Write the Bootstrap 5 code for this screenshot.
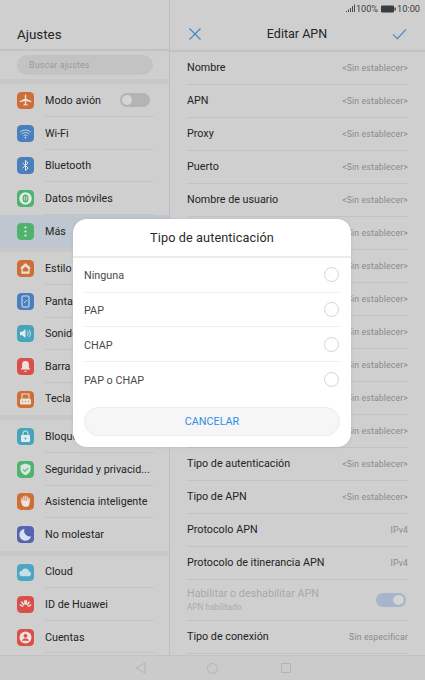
<!DOCTYPE html>
<html lang="es">
<head>
<meta charset="utf-8">
<title>Editar APN</title>
<link href="https://cdn.jsdelivr.net/npm/bootstrap@5.3.0/dist/css/bootstrap.min.css" rel="stylesheet">
<style>
html,body{height:680px;overflow:hidden}
body{background:#cfcfcf;font-family:Roboto,"Liberation Sans",sans-serif;color:#242424;position:relative;width:425px}
.screen{height:655px}
.leftpane{width:170px;border-right:1px solid #bfbfbf;flex:none}
.rightpane{flex:1;min-width:0}
.headbar{height:51px;border-bottom:2px solid #c2c2c2}
.lefthead{padding:28px 0 0 17px;font-size:13.4px;line-height:14px}
.searchwrap{height:28.4px;padding:4px 16px 0 17px}
.searchpill{height:20px;background:#c3c3c3;border-radius:10px;font-size:8.8px;line-height:21px;padding-left:12px;color:#9a9a9a;letter-spacing:.2px}
.band{height:5px;background:#c8c8c8}
.srow{height:32.6px;padding-left:17px;font-size:10.75px}
.srow .stext{flex:1;height:100%;margin-left:11px;margin-right:15px;border-bottom:1px solid #c3c3c3;display:flex;align-items:center;white-space:nowrap;overflow:hidden;padding-top:2px}
.srow.rowlast .stext{border-bottom-color:transparent}
.srow.active{background:#bec7d0}
.ico{width:17px;height:17px;border-radius:4px;flex:none;display:block}
.togg{width:30px;height:14px;border-radius:7px;background:#b4b4b4;margin-left:auto;margin-right:4px;margin-top:-2px;padding:2px;flex:none}
.togg span{display:block;width:10px;height:10px;border-radius:50%;background:#d4d4d4}
.togg.onn{height:14px;background:#a7b5ca;padding-left:17px;margin-right:2px;margin-top:0}
.togg.onn span{width:11px}
.rhead{height:33px;margin-top:17px;padding:0 18px;font-size:12.5px;box-sizing:content-box}
.rhead span{padding-top:1px}
.statusline{position:absolute;top:2px;right:5px;height:13px;font-size:9.2px;color:#3c3c3c;line-height:13px}
.statbatt{margin-left:3px}
.stattime{margin-left:1px}
.arow{height:33px;margin:0 17px;border-bottom:1px solid #c3c3c3;font-size:10.75px}
.arow>span{padding-top:1px}
.arow .aval{font-size:8.6px;color:#8a8a8a;letter-spacing:.18px;white-space:nowrap}
.arow.tall{height:41px;color:#a9a9a9;line-height:1}
.arow.tall small{display:block;font-size:8.2px;color:#acacac;margin-top:4px}
.navstrip{height:25px;border-top:1px solid #c2c2c2;background:#cbcbcb;padding-left:135px}
.navstrip svg{display:block}
.navcircle{margin-left:61px}
.navsquare{margin-left:63px}
.authdlg{position:absolute;left:73px;top:219px;width:278px;height:228px;background:#fff;border:0;border-radius:14px;box-shadow:0 0 3px rgba(0,0,0,.1)}
.dlgtitle{height:39px;border-bottom:2px solid #ececec;font-size:12.7px;color:#2a2a2a;letter-spacing:.1px;padding-top:1px}
.dlgopt{height:34.7px;margin:0 11px;border-bottom:1px solid #f1f1f1;font-size:10.8px;color:#4a4a4a;padding-right:1px}
.dlgopt span{padding-top:3px}
.dlgopt.optlast{border-bottom:0}
.dlgopt input{width:15px;height:15px;margin:0;border:1px solid #d4d4d4;background-color:#fff;flex:none}
.dlgcancel{display:block;margin:10.2px 11px 0;width:256px;height:29px;padding:1px 0 0;background:#f6f6f6;border:1px solid #ececec;border-radius:15px;color:#2f8fe6;font-size:10.8px}
</style>
</head>
<body>
<div class="screen d-flex">
  <aside class="leftpane d-flex flex-column">
    <div class="headbar lefthead">Ajustes</div>
    <div class="searchwrap"><div class="searchpill">Buscar ajustes</div></div>
    <div class="band"></div>

    <div class="srow d-flex align-items-center">
      <svg class="ico" viewBox="0 0 17 17"><rect width="17" height="17" rx="4" fill="#cf6f37"/><path d="M7.8 3.2c0-.9 1.4-.9 1.4 0v3.5l5 2.3v1.3l-5-1.2v2.6l1.4 1v1l-2.1-.6-2.1.6v-1l1.4-1V9.1l-5 1.2V9l5-2.3z" fill="#e9e3dc"/></svg>
      <div class="stext">Modo avión<div class="togg"><span></span></div></div>
    </div>
    <div class="srow d-flex align-items-center">
      <svg class="ico" viewBox="0 0 17 17"><rect width="17" height="17" rx="4" fill="#4a7fbd"/><path d="M3 7.2a8 8 0 0 1 11 0M4.8 9a5.4 5.4 0 0 1 7.4 0M6.5 10.8a3 3 0 0 1 4 0" fill="none" stroke="#cfdcea" stroke-width=".9"/><circle cx="8.5" cy="12.6" r=".9" fill="#dfe6ee"/></svg>
      <div class="stext">Wi-Fi</div>
    </div>
    <div class="srow d-flex align-items-center">
      <svg class="ico" viewBox="0 0 17 17"><rect width="17" height="17" rx="4" fill="#4a7fbd"/><path d="M5.7 6l5.4 5-2.6 2.6V3.4L11.1 6l-5.4 5" fill="none" stroke="#dfe6ee" stroke-width="1"/></svg>
      <div class="stext">Bluetooth</div>
    </div>
    <div class="srow d-flex align-items-center">
      <svg class="ico" viewBox="0 0 17 17"><rect width="17" height="17" rx="4" fill="#4fb26f"/><circle cx="8.5" cy="8.5" r="6.2" fill="#e3ebe4"/><rect x="5.6" y="4.6" width="5.8" height="7.8" rx="2.9" fill="#4fb26f"/><path d="M7.4 6.2v4.4M9.6 6.2v4.4" stroke="#e3ebe4" stroke-width=".8"/></svg>
      <div class="stext">Datos móviles</div>
    </div>
    <div class="srow rowlast active d-flex align-items-center">
      <svg class="ico" viewBox="0 0 17 17"><rect width="17" height="17" rx="4" fill="#4fb26f"/><circle cx="8.5" cy="4.5" r="1.1" fill="#e3ebe4"/><circle cx="8.5" cy="8.5" r="1.1" fill="#e3ebe4"/><circle cx="8.5" cy="12.5" r="1.1" fill="#e3ebe4"/></svg>
      <div class="stext">Más</div>
    </div>
    <div class="band"></div>

    <div class="srow d-flex align-items-center">
      <svg class="ico" viewBox="0 0 17 17"><rect width="17" height="17" rx="4" fill="#cf6f37"/><path d="M8.5 3L2.8 8.2h1.6v5.6h8.2V8.2h1.6z" fill="#e9e3dc"/><path d="M5.8 11.6h5.4V9L8.5 6.5 5.8 9z" fill="#cf6f37"/></svg>
      <div class="stext">Estilo</div>
    </div>
    <div class="srow d-flex align-items-center">
      <svg class="ico" viewBox="0 0 17 17"><rect width="17" height="17" rx="4" fill="#4a7fbd"/><rect x="5" y="3" width="7" height="11" rx="1" fill="none" stroke="#dfe6ee"/><path d="M7.3 9.8l2.4-2.6" stroke="#dfe6ee"/></svg>
      <div class="stext">Pantalla</div>
    </div>
    <div class="srow d-flex align-items-center">
      <svg class="ico" viewBox="0 0 17 17"><rect width="17" height="17" rx="4" fill="#46a4bc"/><path d="M3 6.7h2.3L8.5 4v9L5.3 10.3H3z" fill="#e3ebee"/><path d="M10.2 6.4a3 3 0 0 1 0 4.2M11.8 4.8a5.2 5.2 0 0 1 0 7.4" fill="none" stroke="#e3ebee" stroke-width=".9"/></svg>
      <div class="stext">Sonido</div>
    </div>
    <div class="srow d-flex align-items-center">
      <svg class="ico" viewBox="0 0 17 17"><rect width="17" height="17" rx="4" fill="#d9504a"/><path d="M8.5 3a3.4 3.4 0 0 1 3.4 3.4v3.2l1.4 2H3.7l1.4-2V6.4A3.4 3.4 0 0 1 8.5 3z" fill="#efe3e2"/><path d="M7.2 12.7h2.6a1.3 1.3 0 0 1-2.6 0z" fill="#efe3e2"/></svg>
      <div class="stext">Barra</div>
    </div>
    <div class="srow rowlast d-flex align-items-center">
      <svg class="ico" viewBox="0 0 17 17"><rect width="17" height="17" rx="4" fill="#cf6f37"/><rect x="5" y="3" width="7" height="5" fill="none" stroke="#e9e3dc"/><rect x="3" y="8" width="11" height="5.4" rx="1" fill="#e9e3dc"/><path d="M5 10.4h1M8 10.4h1M11 10.4h1" stroke="#cf6f37"/></svg>
      <div class="stext">Tecla</div>
    </div>
    <div class="band"></div>

    <div class="srow d-flex align-items-center">
      <svg class="ico" viewBox="0 0 17 17"><rect width="17" height="17" rx="4" fill="#46a4bc"/><rect x="4" y="7" width="9" height="7" rx="1" fill="#e3ebee"/><path d="M6 7V5.4a2.5 2.5 0 0 1 5 0V7" fill="none" stroke="#e3ebee"/><circle cx="8.5" cy="10.5" r="1" fill="#46a4bc"/></svg>
      <div class="stext">Bloqueo</div>
    </div>
    <div class="srow d-flex align-items-center">
      <svg class="ico" viewBox="0 0 17 17"><rect width="17" height="17" rx="4" fill="#4fb26f"/><path d="M8.5 2.6l5 1.7v4c0 3-2.2 5-5 6-2.8-1-5-3-5-6v-4z" fill="#d5e6da"/><path d="M6 8.3l2 2 3.2-3.2" fill="none" stroke="#4fb26f" stroke-width="1.1"/></svg>
      <div class="stext">Seguridad y privacid...</div>
    </div>
    <div class="srow d-flex align-items-center">
      <svg class="ico" viewBox="0 0 17 17"><rect width="17" height="17" rx="4" fill="#cf6f37"/><path d="M5 8.4V5.2M6.9 7.6V3.6M8.8 7.6V3.2M10.7 7.8V4M12.2 8.6V5.6" stroke="#eee5dc" stroke-width="1.2" stroke-linecap="round"/><path d="M4.4 8l-1-.9 1.8 5a2.8 2.8 0 0 0 2.6 1.7h1.6a3 3 0 0 0 3-3V7.8H5z" fill="#eee5dc"/></svg>
      <div class="stext">Asistencia inteligente</div>
    </div>
    <div class="srow rowlast d-flex align-items-center">
      <svg class="ico" viewBox="0 0 17 17"><rect width="17" height="17" rx="4" fill="#5563b0"/><path d="M7.6 2.8a6 6 0 1 0 6.6 7.4 5.5 5.5 0 0 1-6.6-7.4z" fill="#dcdfee"/></svg>
      <div class="stext">No molestar</div>
    </div>
    <div class="band"></div>

    <div class="srow d-flex align-items-center">
      <svg class="ico" viewBox="0 0 17 17"><rect width="17" height="17" rx="4" fill="#4ba7c4"/><path d="M5 12.2a2.6 2.6 0 0 1-.3-5.2 3.9 3.9 0 0 1 7.4.5 2.4 2.4 0 0 1 .1 4.7z" fill="#c9dfe6"/></svg>
      <div class="stext">Cloud</div>
    </div>
    <div class="srow d-flex align-items-center">
      <svg class="ico" viewBox="0 0 17 17"><rect width="17" height="17" rx="4" fill="#d9504a"/><g fill="#efe3e2"><ellipse cx="8" cy="6.4" rx=".9" ry="2.6"/><ellipse cx="9.2" cy="6.4" rx=".9" ry="2.6"/><ellipse cx="5.7" cy="7.4" rx=".9" ry="2.5" transform="rotate(-30 5.7 7.4)"/><ellipse cx="11.3" cy="7.4" rx=".9" ry="2.5" transform="rotate(30 11.3 7.4)"/><ellipse cx="4.4" cy="9.6" rx=".8" ry="2.2" transform="rotate(-60 4.4 9.6)"/><ellipse cx="12.6" cy="9.6" rx=".8" ry="2.2" transform="rotate(60 12.6 9.6)"/></g></svg>
      <div class="stext">ID de Huawei</div>
    </div>
    <div class="srow d-flex align-items-center">
      <svg class="ico" viewBox="0 0 17 17"><rect width="17" height="17" rx="4" fill="#d9504a"/><circle cx="8.5" cy="8.5" r="6" fill="#efe3e2"/><circle cx="8.5" cy="6.8" r="1.9" fill="#d9504a"/><path d="M4.9 11.7c.6-1.6 2-2.2 3.6-2.2s3 .6 3.6 2.2z" fill="#d9504a"/></svg>
      <div class="stext">Cuentas</div>
    </div>
  </aside>

  <main class="rightpane d-flex flex-column">
    <div class="headbar rhead d-flex align-items-center justify-content-between">
      <svg width="14" height="14" viewBox="0 0 14 14"><path d="M1.5 1.5l11 11M12.5 1.5l-11 11" stroke="#3f86cc" stroke-width="1.1" fill="none"/></svg>
      <span>Editar APN</span>
      <svg width="15" height="12" viewBox="0 0 15 12"><path d="M1 6.4l4.4 4.2L14 1.4" stroke="#3f86cc" stroke-width="1.1" fill="none"/></svg>
    </div>
    <div class="arow d-flex align-items-center justify-content-between"><span>Nombre</span><span class="aval">&lt;Sin establecer&gt;</span></div>
    <div class="arow d-flex align-items-center justify-content-between"><span>APN</span><span class="aval">&lt;Sin establecer&gt;</span></div>
    <div class="arow d-flex align-items-center justify-content-between"><span>Proxy</span><span class="aval">&lt;Sin establecer&gt;</span></div>
    <div class="arow d-flex align-items-center justify-content-between"><span>Puerto</span><span class="aval">&lt;Sin establecer&gt;</span></div>
    <div class="arow d-flex align-items-center justify-content-between"><span>Nombre de usuario</span><span class="aval">&lt;Sin establecer&gt;</span></div>
    <div class="arow d-flex align-items-center justify-content-end"><span class="aval">&lt;Sin establecer&gt;</span></div>
    <div class="arow d-flex align-items-center justify-content-end"><span class="aval">&lt;Sin establecer&gt;</span></div>
    <div class="arow d-flex align-items-center justify-content-end"><span class="aval">&lt;Sin establecer&gt;</span></div>
    <div class="arow d-flex align-items-center justify-content-end"><span class="aval">&lt;Sin establecer&gt;</span></div>
    <div class="arow d-flex align-items-center justify-content-end"><span class="aval">&lt;Sin establecer&gt;</span></div>
    <div class="arow d-flex align-items-center justify-content-end"><span class="aval">&lt;Sin establecer&gt;</span></div>
    <div class="arow d-flex align-items-center justify-content-end"><span class="aval">&lt;Sin establecer&gt;</span></div>
    <div class="arow d-flex align-items-center justify-content-between"><span>Tipo de autenticación</span><span class="aval">&lt;Sin establecer&gt;</span></div>
    <div class="arow d-flex align-items-center justify-content-between"><span>Tipo de APN</span><span class="aval">&lt;Sin establecer&gt;</span></div>
    <div class="arow d-flex align-items-center justify-content-between"><span>Protocolo APN</span><span class="aval">IPv4</span></div>
    <div class="arow d-flex align-items-center justify-content-between"><span>Protocolo de itinerancia APN</span><span class="aval">IPv4</span></div>
    <div class="arow tall d-flex align-items-center justify-content-between"><div>Habilitar o deshabilitar APN<small>APN habilitado</small></div><div class="togg onn"><span></span></div></div>
    <div class="arow d-flex align-items-center justify-content-between"><span>Tipo de conexión</span><span class="aval">Sin especificar</span></div>
  </main>
</div>

<div class="statusline d-flex align-items-center">
  <svg width="10" height="9" viewBox="0 0 10 9"><path d="M0 8h1V7H0zM2 8h1V5.5H2zM4 8h1V4H4zM6 8h1V2H6zM8 8h1V.5H8z" fill="#4a4a4a"/></svg>
  <span>100%</span>
  <svg class="statbatt" width="15" height="8" viewBox="0 0 15 8"><rect x="0" y=".5" width="13" height="7" rx="1" fill="#3c3c3c"/><rect x="13.4" y="2.5" width="1.4" height="3" fill="#3c3c3c"/></svg>
  <span class="stattime">10:00</span>
</div>

<div class="navstrip d-flex align-items-center">
  <svg width="11" height="12" viewBox="0 0 11 12"><path d="M10 .8L1 6l9 5.2z" fill="none" stroke="#b4b4b4"/></svg>
  <svg class="navcircle" width="11" height="11" viewBox="0 0 11 11"><circle cx="5.5" cy="5.5" r="5" fill="none" stroke="#b4b4b4"/></svg>
  <svg class="navsquare" width="10" height="10" viewBox="0 0 10 10"><rect x=".5" y=".5" width="9" height="9" fill="none" stroke="#b4b4b4"/></svg>
</div>

<div class="authdlg card">
  <div class="dlgtitle d-flex align-items-center justify-content-center">Tipo de autenticación</div>
  <label class="dlgopt d-flex align-items-center justify-content-between"><span>Ninguna</span><input class="form-check-input" type="radio" name="auth"></label>
  <label class="dlgopt d-flex align-items-center justify-content-between"><span>PAP</span><input class="form-check-input" type="radio" name="auth"></label>
  <label class="dlgopt d-flex align-items-center justify-content-between"><span>CHAP</span><input class="form-check-input" type="radio" name="auth"></label>
  <label class="dlgopt optlast d-flex align-items-center justify-content-between"><span>PAP o CHAP</span><input class="form-check-input" type="radio" name="auth"></label>
  <button type="button" class="btn dlgcancel">CANCELAR</button>
</div>
<script src="https://cdn.jsdelivr.net/npm/bootstrap@5.3.0/dist/js/bootstrap.bundle.min.js"></script>
</body>
</html>
